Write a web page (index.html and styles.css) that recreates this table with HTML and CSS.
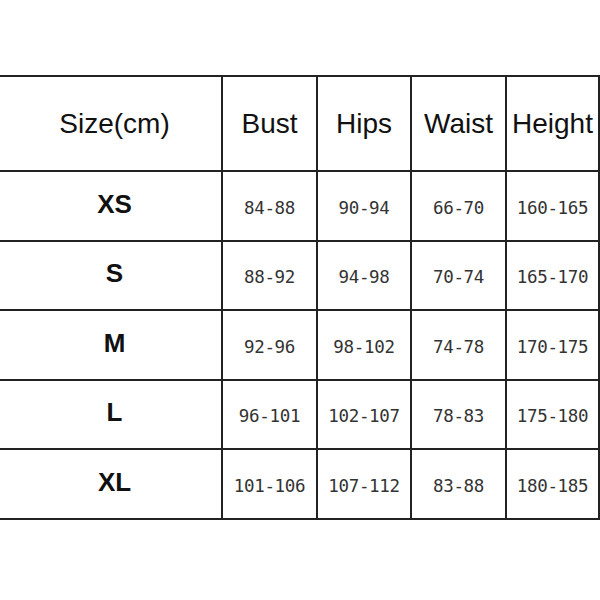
FILE: index.html
```html
<!DOCTYPE html>
<html>
<head>
<meta charset="utf-8">
<link rel="stylesheet" href="styles.css">
</head>
<body>
<div class="chart">
  <div class="cell head first">Size(cm)</div>
  <div class="cell head">Bust</div>
  <div class="cell head">Hips</div>
  <div class="cell head">Waist</div>
  <div class="cell head last">Height</div>

  <div class="cell size first">XS</div>
  <div class="cell num">84-88</div>
  <div class="cell num">90-94</div>
  <div class="cell num">66-70</div>
  <div class="cell num last">160-165</div>

  <div class="cell size first">S</div>
  <div class="cell num">88-92</div>
  <div class="cell num">94-98</div>
  <div class="cell num">70-74</div>
  <div class="cell num last">165-170</div>

  <div class="cell size first">M</div>
  <div class="cell num">92-96</div>
  <div class="cell num">98-102</div>
  <div class="cell num">74-78</div>
  <div class="cell num last">170-175</div>

  <div class="cell size first">L</div>
  <div class="cell num">96-101</div>
  <div class="cell num">102-107</div>
  <div class="cell num">78-83</div>
  <div class="cell num last">175-180</div>

  <div class="cell size first bottom">XL</div>
  <div class="cell num bottom">101-106</div>
  <div class="cell num bottom">107-112</div>
  <div class="cell num bottom">83-88</div>
  <div class="cell num last bottom">180-185</div>
</div>
</body>
</html>
```
FILE: styles.css
```css
html, body {
  margin: 0;
  padding: 0;
  background: #ffffff;
}
body {
  width: 600px;
  height: 600px;
  padding-top: 75px;
  box-sizing: border-box;
}
.chart {
  display: grid;
  grid-template-columns: 221px 95px 94px 95px 95px;
  grid-template-rows: 95px 70px 69px 70px 69px 72px;
  color: #111;
}
.cell {
  box-sizing: border-box;
  border-top: 2px solid #222;
  border-left: 2px solid #222;
  display: flex;
  align-items: center;
  justify-content: center;
}
.cell.first {
  border-left: none;
  padding-left: 8px;
}
.cell.last {
  border-right: 2px solid #222;
}
.cell.bottom {
  border-bottom: 2px solid #222;
}
.head {
  font-family: "Liberation Sans", Arial, sans-serif;
  font-size: 28px;
  padding-top: 1px;
}
.size {
  font-family: "Liberation Sans", Arial, sans-serif;
  font-weight: bold;
  font-size: 26px;
  padding-bottom: 4px;
}
.num {
  font-family: "DejaVu Sans Mono", monospace;
  font-size: 17.5px;
  letter-spacing: -0.3px;
  color: #333;
  padding-top: 3px;
}
```
